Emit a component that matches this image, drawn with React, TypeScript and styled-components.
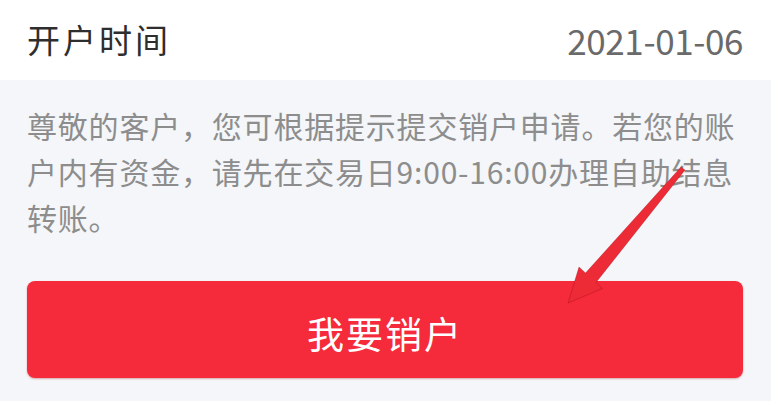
import React from 'react';
import styled, { createGlobalStyle } from 'styled-components';

/* -------------- GLOBAL --------------- */

const GlobalStyle = createGlobalStyle`
  html, body {
    margin: 0;
    padding: 0;
    background-color: #f4f6f9;
  }

  body {
    font-family: "Noto Sans CJK SC", "Noto Sans", sans-serif;
  }
`;

/* -------------- CONTAINERS --------------- */

const Page = styled.div`
  position: relative;
  width: 771px;
  height: 401px;
  overflow: hidden;
  display: flex;
  flex-direction: column;
  background-color: #f4f6f9;
`;

const InfoRow = styled.div`
  display: flex;
  justify-content: space-between;
  align-items: center;
  height: 80px;
  padding: 0 28px 2px 27px;
  background-color: #ffffff;
  box-sizing: border-box;
`;

const Label = styled.span`
  font-size: 33px;
  letter-spacing: 3px;
  color: #2e2e2e;
`;

const Value = styled.span`
  font-size: 35px;
  letter-spacing: -0.4px;
  color: #6a6a6a;
`;

const Notice = styled.p`
  margin: 0;
  padding: 22px 28px 0 27px;
  font-size: 30px;
  line-height: 46px;
  letter-spacing: 0.8px;
  color: #8d8d8d;
`;

/* -------------- BUTTON --------------- */

const CloseButton = styled.button`
  display: flex;
  align-items: center;
  justify-content: center;
  margin: 41px 28px 0 27px;
  padding: 6px 0 0;
  height: 97px;
  border: none;
  border-radius: 8px;
  background-color: #f52a3a;
  box-shadow: 0 1px 2px rgba(160, 20, 30, 0.35);
  color: #ffffff;
  font-family: "Noto Sans CJK SC", "Noto Sans", sans-serif;
  font-size: 37px;
  letter-spacing: 2px;
  cursor: pointer;
`;

/* -------------- ANNOTATION --------------- */

const Arrow = styled.svg`
  position: absolute;
  left: 0;
  top: 0;
  width: 771px;
  height: 401px;
  pointer-events: none;
`;

const App = () => {
  return (
    <>
      <GlobalStyle />
      <Page>
        <InfoRow>
          <Label>开户时间</Label>
          <Value>2021-01-06</Value>
        </InfoRow>
        <Notice>
          尊敬的客户，您可根据提示提交销户申请。若您的账户内有资金，请先在交易日9:00-16:00办理自助结息转账。
        </Notice>
        <CloseButton type="button">我要销户</CloseButton>

        {/* red arrow pointing at the button */}
        <Arrow viewBox="0 0 771 401">
          <polygon
            points="685,170 596,282.5 602.5,288.5 568,303 579,267 585.5,273 681,167"
            fill="#ec2b37"
            stroke="rgba(140,0,10,0.35)"
            strokeWidth="0.8"
          />
        </Arrow>
      </Page>
    </>
  );
};

export default App;
